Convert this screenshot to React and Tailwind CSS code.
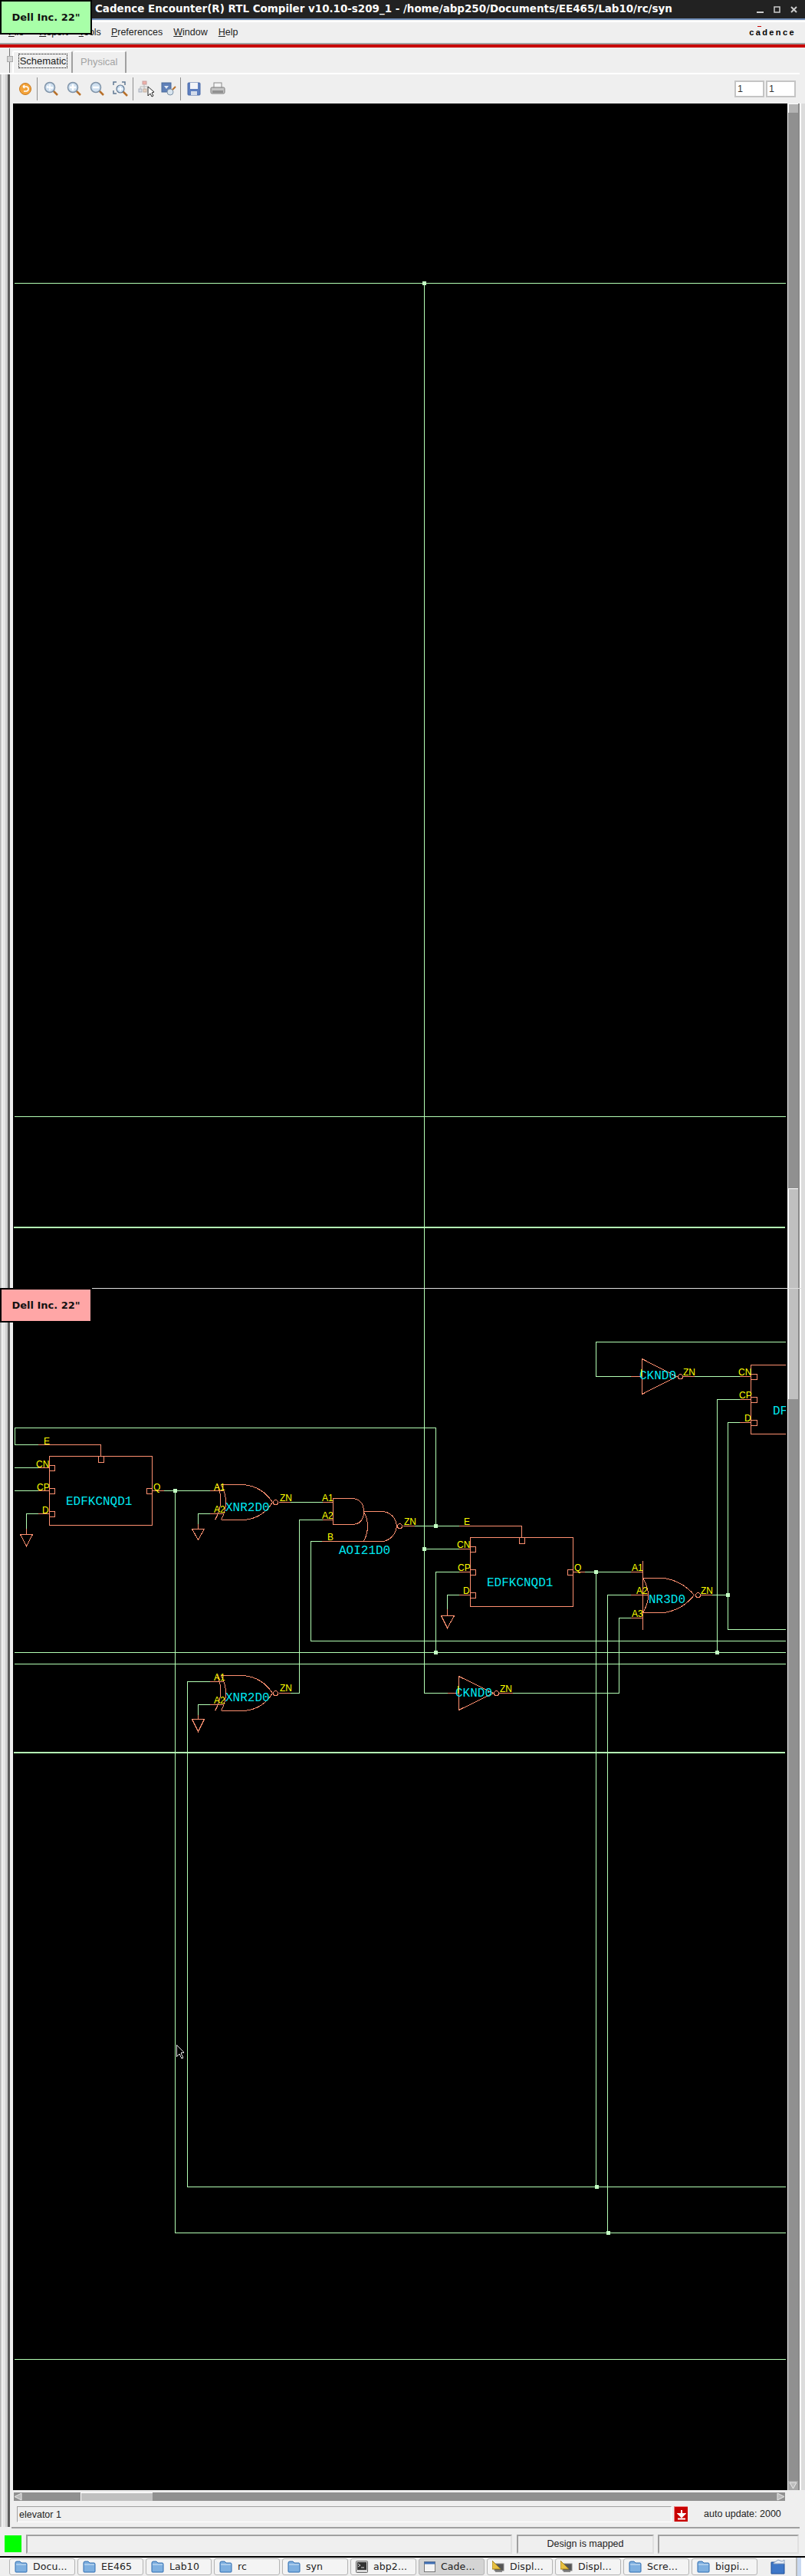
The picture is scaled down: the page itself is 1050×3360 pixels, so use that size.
import React from 'react';

const GREEN = '#b4ffb4';
const ORANGE = '#ff9070';

const greenWires = [
  'M19 1884 V1862 H568 V1990',
  'M18 1914 H49',
  'M18 1944 H49',
  'M49 1884 H19',
  'M49 1974 H34 V1993',
  'M213 1944 H273',
  'M228 1944 V2912 H1024',
  'M273 1974 H258 V1987',
  'M378 1959 H420',
  'M420 1982 H390 V2208 H378',
  'M419 2010 H405 V2140 H1024',
  'M18 2155 H1024',
  'M18 2170 H1024',
  'M540 1990 H598',
  'M553 369 V2208 H583',
  'M553 2020 H598',
  'M598 2050 H568 V2155',
  'M598 2080 H583 V2098',
  'M762 2050 H822',
  'M777 2050 V2852',
  'M822 2080 H792 V2912',
  'M822 2110 H807 V2208 H668',
  'M928 2080 H949',
  'M964 1855 H949 V2125 H1024',
  'M822 1795 H777 V1750 H1024',
  'M905 1795 H964',
  'M964 1825 H935 V2155',
  'M273 2193 H244 V2852 H1024',
  'M273 2223 H258 V2236',
  'M18 369 H1024',
  'M18 1456 H1024',
  'M18 3077 H1024',
];

const xorGate = (y) => [
  `M273 ${y + 8} H291`,
  `M273 ${y + 38} H291`,
  `M288 ${y} H318 Q342 ${y + 3} 355 ${y + 23} Q342 ${y + 44} 318 ${y + 46} H288`,
  `M288 ${y} Q300 ${y + 23} 288 ${y + 46}`,
  `M283 ${y} Q293 ${y + 23} 280 ${y + 46}`,
  `M363 ${y + 23} H378`,
];

const orangeWires = [
  'M49 1884 H131 V1899',
  'M49 1914 H64',
  'M49 1944 H64',
  'M49 1974 H64',
  'M198 1944 H213',
  'M64 1899 H198 V1989 H64 Z',
  'M128 1899 H135 V1907 H128 Z',
  'M64 1911 H71 V1918 H64',
  'M64 1941 H71 V1948 H64',
  'M64 1971 H71 V1978 H64',
  'M198 1941 H191 V1948 H198',
  'M34 1993 V2001',
  'M26 2001 H42 L34 2016 Z',
  'M258 1987 V1994',
  'M250 1994 H266 L258 2008 Z',
  ...xorGate(1936),
  ...xorGate(2185),
  'M258 2236 V2242',
  'M250 2242 H266 L258 2258 Z',
  'M420 1959 H434',
  'M420 1982 H434',
  'M434 1954 H460 Q474 1956 474 1971 Q474 1988 458 1988 H434 Z',
  'M474 1971 H500 Q515 1974 517 1990 Q515 2006 500 2010 H419',
  'M474 1971 Q484 1990 474 2010',
  'M525 1990 H540',
  'M598 1990 H680 V2005',
  'M598 2020 H613',
  'M598 2050 H613',
  'M598 2080 H613',
  'M747 2050 H762',
  'M613 2005 H747 V2095 H613 Z',
  'M677 2005 H684 V2013 H677 Z',
  'M613 2017 H620 V2024 H613',
  'M613 2047 H620 V2054 H613',
  'M613 2077 H620 V2084 H613',
  'M747 2047 H740 V2054 H747',
  'M583 2098 V2107',
  'M575 2107 H592 L583 2123 Z',
  'M822 2050 H838',
  'M822 2080 H845',
  'M822 2110 H838',
  'M838 2035 V2125',
  'M838 2058 H866 Q890 2062 905 2080 Q890 2099 866 2103 H838',
  'M838 2058 Q852 2080 838 2103',
  'M913 2080 H928',
  'M598 2186 L643 2208 L598 2230 Z',
  'M583 2208 H598',
  'M650 2208 H668',
  'M837 1772 L882 1795 L837 1818 Z',
  'M822 1795 H837',
  'M890 1795 H905',
  'M1024 1780 H979 V1870 H1024',
  'M964 1795 H979',
  'M964 1825 H979',
  'M964 1855 H979',
  'M979 1792 H987 V1799 H979',
  'M979 1822 H987 V1829 H979',
  'M979 1852 H987 V1859 H979',
];

const bubbles = [[359, 1959], [359, 2208], [521, 1990], [910, 2080], [647, 2208], [887, 1795]];

const dots = [
  [553, 369], [228, 1944], [568, 1990], [553, 2020], [777, 2050], [949, 2080],
  [568, 2155], [935, 2155], [778, 2852], [793, 2912],
];

const pinLabels = [
  ['E', 57, 1884], ['CN', 47, 1914], ['CP', 48, 1944], ['D', 55, 1974], ['Q', 200, 1944],
  ['A1', 279, 1944], ['A2', 279, 1973], ['ZN', 365, 1958],
  ['A1', 420, 1958], ['A2', 420, 1981], ['B', 427, 2009],
  ['ZN', 527, 1989], ['E', 605, 1989], ['CN', 596, 2019], ['CP', 597, 2049], ['D', 604, 2079], ['Q', 749, 2049],
  ['A1', 824, 2049], ['A2', 830, 2079], ['A3', 824, 2109], ['ZN', 914, 2079],
  ['I', 835, 1795], ['ZN', 891, 1794], ['CN', 963, 1794], ['CP', 964, 1824], ['D', 971, 1854],
  ['A1', 279, 2192], ['A2', 279, 2222], ['ZN', 365, 2206], ['I', 596, 2208], ['ZN', 652, 2207],
];

const cellLabels = [
  ['EDFKCNQD1', 86, 1963], ['XNR2D0', 294, 1971], ['AOI21D0', 442, 2027],
  ['EDFKCNQD1', 635, 2069], ['NR3D0', 846, 2091], ['CKND0', 834, 1799],
  ['XNR2D0', 294, 2219], ['CKND0', 594, 2213], ['DF', 1008, 1845],
];

const Schematic = () => (
  <svg width="1010" height="3113" viewBox="17 135 1010 3113" shapeRendering="crispEdges" className="block">
    <defs>
      <clipPath id="sheet">
        <rect x="17" y="135" width="1008" height="3113" />
      </clipPath>
    </defs>
    <g clipPath="url(#sheet)">
      <g fill="none" strokeWidth="1" transform="translate(0.5 0.5)">
        {greenWires.map((d) => <path key={d} d={d} stroke={GREEN} />)}
        {orangeWires.map((d, i) => <path key={i} d={d} stroke={ORANGE} />)}
        {bubbles.map(([x, y]) => <circle key={`${x}-${y}`} cx={x} cy={y} r="3" stroke={ORANGE} />)}
      </g>
      <rect x="18" y="1600" width="1006" height="2" fill={GREEN} />
      <rect x="18" y="2285" width="1006" height="2" fill={GREEN} />
      {dots.map(([x, y]) => <rect key={`${x}-${y}`} x={x - 2} y={y - 2} width="5" height="5" fill="#c4ffc4" />)}
      {cellLabels.map(([t, x, y]) => (
        <text key={`${t}-${x}-${y}`} x={x} y={y} fontSize="16" fill="#00e8f0" className="font-['Liberation_Mono',monospace]">{t}</text>
      ))}
      {pinLabels.map(([t, x, y]) => (
        <text key={`${t}-${x}-${y}`} x={x} y={y} fontSize="12" fill="#ffff00" className="font-['Liberation_Sans',sans-serif]">{t}</text>
      ))}
      {/* mouse pointer */}
      <path d="M230 2667 L230 2683 L234 2679 L237 2685 L239 2684 L236 2678 L240 2677 Z" fill="#000" stroke="#ddd" strokeWidth="1" />
    </g>
  </svg>
);

const Magnifier = ({ mark }) => (
  <svg width="20" height="20" viewBox="0 0 20 20">
    <path d="M11 11 L18 18" stroke="#b8702a" strokeWidth="2.5" />
    <circle cx="8" cy="8" r="6.5" fill="#cfe0f0" stroke="#7f93a8" strokeWidth="1.5" />
    {mark === 'plus' && <path d="M4 8 H12 M8 4 V12" stroke="#fff" strokeWidth="2.5" />}
    {mark === 'minus' && <path d="M4 8 H12" stroke="#fff" strokeWidth="2.5" />}
    {mark === 'fit' && <path d="M4 8 H12 M8 4 V12 M4 8 L6 6 M12 8 L10 10" stroke="#fff" strokeWidth="1.5" />}
  </svg>
);

const Sep = () => <div className="w-px h-[30px] bg-[#8f8f8f]" />;

const Toolbar = () => (
  <div className="flex-1 h-[38px] flex items-center pl-[8px] pr-[5px]">
    <div className="w-[16px] h-[16px] rounded-full bg-[#f3a33a] border border-[#c97a20] flex items-center justify-center">
      <svg width="12" height="12" viewBox="0 0 12 12"><path d="M3 3 H7 A3 3 0 0 1 7 9 H4 M3 3 L5 1 M3 3 L5 5" fill="none" stroke="#fff" strokeWidth="1.5" /></svg>
    </div>
    <div className="ml-[7px]"><Sep /></div>
    <div className="ml-[8px] flex gap-[10px]">
      <Magnifier mark="fit" />
      <Magnifier mark="plus" />
      <Magnifier mark="minus" />
      <svg width="20" height="20" viewBox="0 0 20 20">
        <path d="M1 5 V1 H5 M12 1 H16 V5 M1 12 V16 H5" fill="none" stroke="#5f7893" strokeWidth="1.5" />
        <path d="M13 13 L19 19" stroke="#b8702a" strokeWidth="2.5" />
        <circle cx="10" cy="10" r="5" fill="#cfe0f0" stroke="#5f7893" strokeWidth="1.2" />
        <path d="M7 10 H13 M10 7 V13" stroke="#fff" strokeWidth="1.5" />
      </svg>
    </div>
    <div className="ml-[6px]"><Sep /></div>
    <div className="ml-[6px]">
      <svg width="22" height="22" viewBox="0 0 22 22">
        <rect x="6" y="1" width="5" height="4" fill="#f0b0a8" stroke="#c8a0a0" />
        <rect x="1" y="11" width="4" height="4" fill="#d8dce4" stroke="#a8b0bc" />
        <rect x="7" y="11" width="4" height="4" fill="#e8d0c0" stroke="#c0b0a0" />
        <path d="M8 5 V11 M3 11 V8 H14" stroke="#b8b8b8" fill="none" />
        <path d="M13 8 L13 20 L16 17 L18 21 L20 20 L18 16 L21 15 Z" fill="#fff" stroke="#222" />
      </svg>
    </div>
    <div className="ml-[8px]">
      <svg width="20" height="20" viewBox="0 0 20 20">
        <rect x="1" y="2" width="12" height="12" fill="#5f80b8" stroke="#4a6a9a" />
        <path d="M4 6 L10 6 L7 10 Z" fill="#dfe8f4" />
        <circle cx="12" cy="14" r="4" fill="#d8e4ee" stroke="#7f93a8" />
        <path d="M15 11 L19 7" stroke="#b8702a" strokeWidth="2" />
      </svg>
    </div>
    <div className="ml-[5px]"><Sep /></div>
    <div className="ml-[8px]">
      <svg width="18" height="18" viewBox="0 0 18 18">
        <rect x="1" y="1" width="16" height="16" rx="1" fill="#5f80c0" stroke="#4a6aa8" />
        <rect x="4" y="1" width="10" height="8" fill="#f2f4f8" />
        <rect x="5" y="12" width="8" height="5" fill="#d4dcea" />
      </svg>
    </div>
    <div className="ml-[12px]">
      <svg width="20" height="18" viewBox="0 0 20 18">
        <rect x="5" y="1" width="10" height="7" fill="#f4f4f4" stroke="#8a8a8a" />
        <rect x="1" y="7" width="18" height="8" rx="1.5" fill="#c4c4c4" stroke="#7a7a7a" />
        <rect x="3" y="11" width="14" height="3" fill="#909090" />
      </svg>
    </div>
    <div className="ml-auto flex gap-[2px]">
      {[0, 1].map((i) => (
        <div key={i} className="w-[39px] h-[22px] bg-white border-2 border-[#c4c4c4] pl-[2px] text-[12.5px] leading-[19px] text-[#333]">1</div>
      ))}
    </div>
  </div>
);

const Rail = () => (
  <div className="flex-none w-[17px] flex self-stretch">
    <div className="w-[2px] bg-[#bdbdbd]" />
    <div className="w-[1px] bg-white" />
    <div className="w-[4px] bg-[#e6e6e6]" />
    <div className="w-[3px] bg-[#cfcfcf]" />
    <div className="w-[3px] bg-[#5c5c5c]" />
    <div className="w-[4px] bg-[#efefef]" />
  </div>
);

const FolderIcon = () => (
  <svg width="17" height="16" viewBox="0 0 17 16" className="flex-none">
    <path d="M1 3 Q1 1 3 1 H7 L9 3 H15 Q16 3 16 5 V14 Q16 15 15 15 H2 Q1 15 1 14 Z" fill="#7fb0e0" stroke="#2f6cb0" />
    <path d="M2 5 H15" stroke="#d8e8f8" />
  </svg>
);

const TermIcon = () => (
  <svg width="16" height="16" viewBox="0 0 16 16" className="flex-none">
    <rect x="0.5" y="0.5" width="15" height="15" rx="1" fill="#d8d8d8" stroke="#666" />
    <rect x="2" y="2" width="12" height="10" fill="#333" />
    <path d="M3 4 L6 6 L3 8 M7 9 H11" stroke="#ddd" fill="none" />
  </svg>
);

const WindowIcon = () => (
  <svg width="15" height="14" viewBox="0 0 15 14" className="flex-none">
    <rect x="0.5" y="0.5" width="14" height="13" fill="#f4f4f4" stroke="#777" />
    <rect x="0.5" y="0.5" width="14" height="3" fill="#3f6fb5" />
  </svg>
);

const DisplayIcon = () => (
  <svg width="16" height="18" viewBox="0 0 16 18" className="flex-none">
    <rect x="3" y="5" width="12" height="9" fill="#555" stroke="#888" />
    <path d="M0 1 L11 12 H0 Z" fill="#e8c040" stroke="#a08020" />
    <path d="M4 15 H13" stroke="#888" strokeWidth="2" />
  </svg>
);

const tasks = [
  { label: 'Docu...', icon: <FolderIcon /> },
  { label: 'EE465', icon: <FolderIcon /> },
  { label: 'Lab10', icon: <FolderIcon /> },
  { label: 'rc', icon: <FolderIcon /> },
  { label: 'syn', icon: <FolderIcon /> },
  { label: 'abp2...', icon: <TermIcon /> },
  { label: 'Cade...', icon: <WindowIcon />, active: true },
  { label: 'Displ...', icon: <DisplayIcon /> },
  { label: 'Displ...', icon: <DisplayIcon /> },
  { label: 'Scre...', icon: <FolderIcon /> },
  { label: 'bigpi...', icon: <FolderIcon /> },
];

const Taskbar = () => (
  <div className="h-[24px] flex-none flex items-center bg-[#efefef] pl-[12px] gap-[3px] font-['DejaVu_Sans',sans-serif] text-[12.5px] text-[#222] tracking-[0.1px]">
    {tasks.map((t, i) => (
      <div
        key={i}
        className={`w-[86px] h-[22px] flex-none flex items-center gap-[7px] pl-[6px] rounded-[3px] border border-[#b4b4b4] ${t.active ? 'bg-[#d4d4d4]' : 'bg-[#f4f4f4]'}`}
      >
        {t.icon}
        <span>{t.label}</span>
      </div>
    ))}
    <div className="ml-[13px] flex-none">
      <svg width="22" height="22" viewBox="0 0 22 22">
        <path d="M2 5 H9 L11 7 H19 V20 H2 Z" fill="#3f78c8" stroke="#1f4f98" />
        <path d="M5 6 L11 2 L16 4 L19 2 V7 H5 Z" fill="#e8eef6" stroke="#8aa0c0" />
      </svg>
    </div>
    <div className="ml-[9px] flex-none w-[18px] h-[24px] border-l-2 border-[#b8b8b8] bg-white flex">
      <div className="w-[5px] h-full bg-[#c8d8f0]" />
    </div>
  </div>
);

const Field = ({ className, children }) => (
  <div className={`h-[25px] border-t-2 border-l-2 border-[#a0a0a0] border-r-2 border-b-2 border-r-[#e0e0e0] border-b-[#e0e0e0] flex items-center justify-center ${className}`}>
    {children}
  </div>
);

const MonitorTag = ({ top, color }) => (
  <div className={`absolute left-0 w-[120px] h-[45px] bg-black p-[2px] ${top}`}>
    <div className={`w-full h-full flex items-center justify-center font-['DejaVu_Sans',sans-serif] font-bold text-[13px] text-[#111] ${color}`}>
      Dell Inc. 22"
    </div>
  </div>
);

const Menu = ({ first, rest, className }) => (
  <span className={className}><span className="underline">{first}</span>{rest}</span>
);

export default function App() {
  return (
    <div className="relative w-[1050px] h-[3360px] overflow-hidden bg-[#efefef] flex flex-col font-['Liberation_Sans',sans-serif] text-[#222]">
      {/* title bar */}
      <div className="h-[26px] flex-none flex items-center bg-[#222] border-b-2 border-[#6f8db8] pl-[124px] pr-[10px] text-white font-['DejaVu_Sans',sans-serif] font-bold text-[13.45px]">
        <span className="whitespace-pre">Cadence Encounter(R) RTL Compiler v10.10-s209_1 - /home/abp250/Documents/EE465/Lab10/rc/syn</span>
        <div className="ml-auto flex items-center gap-[13px] text-[#ccc]">
          <svg width="9" height="9" viewBox="0 0 9 9"><path d="M0 8 H9" stroke="#ccc" strokeWidth="2" /></svg>
          <svg width="9" height="9" viewBox="0 0 9 9"><rect x="1" y="1" width="7" height="7" fill="none" stroke="#ccc" strokeWidth="1.5" /></svg>
          <svg width="9" height="9" viewBox="0 0 9 9"><path d="M1 1 L8 8 M8 1 L1 8" stroke="#ccc" strokeWidth="2" /></svg>
        </div>
      </div>

      {/* menu bar */}
      <div className="h-[31px] flex-none flex items-center mt-[1px] border-t-2 border-white border-b-2 border-b-[#a0a0a0] pl-[11px] pr-[12px] text-[12.5px]">
        <Menu first="F" rest="ile" className="mr-[20px]" />
        <Menu first="R" rest="eport" className="mr-[14px]" />
        <Menu first="T" rest="ools" className="mr-[13px]" />
        <Menu first="P" rest="references" className="mr-[14px]" />
        <Menu first="W" rest="indow" className="mr-[14px]" />
        <Menu first="H" rest="elp" />
        <div className="ml-auto relative font-bold text-[11px] tracking-[2.4px] text-black">
          cadence
          <div className="absolute left-[11px] top-[0px] w-[5px] h-px bg-[#c80000]" />
        </div>
      </div>
      <div className="h-[4px] flex-none bg-[#c80000]" />

      {/* tabs */}
      <div className="relative h-[35px] flex-none flex items-end pl-[16px] border-b-2 border-white mr-[7px]">
        <div className="absolute left-[12px] top-[1px] bottom-0 w-px bg-[#777]" />
        <div className="absolute left-[9px] top-[11px] w-[8px] h-[8px] bg-[#d4d4d4] border border-[#aaa]" />
        <div className="w-[79px] h-[29px] border-t-2 border-l-2 border-white border-r-2 border-r-[#a0a0a0] rounded-t-[3px] pl-[6px] pt-[2px]">
          <div className="w-[64px] h-[19px] border border-dotted border-black text-[13px] leading-[17px] text-center whitespace-nowrap">Schematic</div>
        </div>
        <div className="w-[69px] h-[29px] ml-[1px] border-t-2 border-white border-r-2 border-r-[#a0a0a0] rounded-t-[3px] pl-[9px] pt-[4px] text-[13px] leading-[17px] text-[#a4a4a4]">Physical</div>
      </div>

      {/* main panel */}
      <div className="flex-1 min-h-0 flex flex-col">
        <div className="flex pr-[7px]">
          <Rail />
          <Toolbar />
        </div>
        <div className="flex-1 min-h-0 flex">
          <Rail />
          <div className="flex-1 min-w-0 flex flex-col">
            <div className="flex h-[3113px] flex-none">
              <div className="w-[1010px] h-[3113px] bg-black flex-none"><Schematic /></div>
              <div className="w-[1px] bg-[#f4f4f4]" />
              <div className="w-[13px] bg-[#909090] flex flex-col">
                <div className="h-[12px] flex-none bg-[#b4b4b4] border-t border-l border-white" />
                <div className="h-[275px] flex-none mt-[1403px] bg-[#c0c0c0] border-t border-l border-white" />
                <div className="h-[12px] flex-none mt-auto bg-[#a8a8a8] flex items-center justify-center">
                  <svg width="11" height="10" viewBox="0 0 11 10"><path d="M1 1 H10 L5.5 9 Z" fill="#bdbdbd" stroke="#e8e8e8" /></svg>
                </div>
              </div>
              <div className="w-[2px] bg-[#8a8a8a]" />
              <div className="w-[2px] bg-white" />
              <div className="flex-1 bg-[#dcdcdc]" />
            </div>
            {/* horizontal scrollbar */}
            <div className="h-[3px] flex-none" />
            <div className="h-[11px] w-[1006px] flex-none ml-[1px] bg-[#909090] flex items-center">
              <svg width="11" height="11" viewBox="0 0 11 11" className="flex-none"><path d="M10 1 V10 L1 5.5 Z" fill="#bdbdbd" stroke="#e8e8e8" /></svg>
              <div className="ml-[76px] w-[94px] h-[11px] bg-[#c0c0c0] border-t border-l border-white" />
              <svg width="11" height="11" viewBox="0 0 11 11" className="flex-none ml-auto"><path d="M1 1 V10 L10 5.5 Z" fill="#bdbdbd" stroke="#e8e8e8" /></svg>
            </div>
            {/* message line */}
            <div className="h-[34px] flex-none flex items-center pl-[5px] pr-[6px]">
              <div className="w-[854px] h-[21px] border-t border-l border-[#a0a0a0] border-r border-b border-r-white border-b-white pl-[2px] text-[12.5px] leading-[20px]">elevator 1</div>
              <div className="ml-[3px] w-[18px] h-[20px] bg-[#c80000] border-t border-l border-[#f08080] flex items-center justify-center">
                <svg width="12" height="14" viewBox="0 0 12 14"><path d="M6 1 V7 M2 6 L6 10 L10 6 Z M1 12.5 H11" stroke="#fff" strokeWidth="2" fill="#fff" /></svg>
              </div>
              <span className="ml-[21px] text-[12.5px] whitespace-nowrap">auto update: 2000</span>
            </div>
          </div>
        </div>
        <div className="h-[2px] flex-none bg-[#a0a0a0] ml-[15px] mr-[7px]" />
      </div>

      {/* status bar */}
      <div className="h-[36px] flex-none flex items-center pl-[6px] pr-[8px] pt-[4px] text-[12.5px]">
        <div className="w-[22px] h-[22px] bg-[#00ff00]" />
        <Field className="ml-[6px] w-[634px]" />
        <Field className="ml-[6px] w-[179px]">Design is mapped</Field>
        <Field className="ml-[5px] w-[184px]" />
      </div>
      <div className="h-[2px] flex-none bg-black" />
      <Taskbar />

      {/* monitor tags and the seam between the two displays */}
      <div className="absolute left-[120px] right-0 top-[1680px] h-px bg-[#dedede]" />
      <MonitorTag top="top-0" color="bg-[#a8ffa8]" />
      <MonitorTag top="top-[1680px]" color="bg-[#ffa6a6]" />
    </div>
  );
}
